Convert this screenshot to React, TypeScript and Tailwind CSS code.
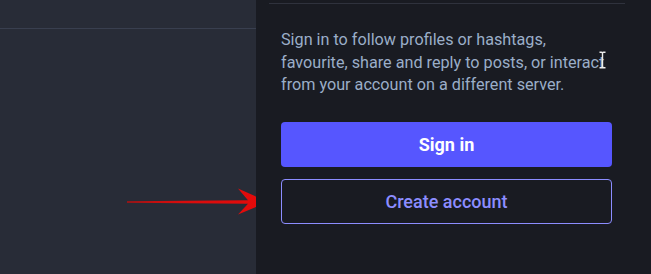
export default function App() {
  return (
    <div className="flex h-[274px] w-[651px] overflow-hidden font-['Roboto',sans-serif]">
      <div className="relative w-[256px] shrink-0 bg-[#282c37]">
        <div className="mt-[28px] h-px bg-[#393f4f]" />
        <svg className="absolute left-[126px] top-[188px]" width="145" height="28" viewBox="0 0 145 28">
          <defs>
            <linearGradient id="g" x1="0" x2="1" y1="0" y2="0">
              <stop offset="0" stopColor="#b01010" />
              <stop offset="0.4" stopColor="#d80d0d" />
              <stop offset="1" stopColor="#e60a0a" />
            </linearGradient>
          </defs>
          <path d="M1 13.3 L122 12.2 L112 0.5 L142 14 L112 26.5 L122 15.8 L1 14.7 Z" fill="url(#g)" />
        </svg>
      </div>
      <div className="relative flex-1 bg-[#191b22] pl-[25px] pr-[39px]">
        <div className="ml-[-12px] mr-[-13px] mt-[3px] h-px bg-[#2f323d]" />
        <p className="mt-[25px] text-[16.2px] leading-[22.5px] text-[#9baec8]">
          Sign in to follow profiles or hashtags, favourite, share and reply to posts, or interact from your account on a different server.
        </p>
        <button className="mt-[25px] flex h-[45px] w-full items-center justify-center rounded-[4px] bg-[#5656ff] text-[18px] font-bold text-white">
          Sign in
        </button>
        <button className="mt-[12px] flex h-[45px] w-full items-center justify-center rounded-[4px] border border-[#8c8dff] text-[18px] font-medium text-[#8c8dff]">
          Create account
        </button>
        <svg className="absolute left-[342px] top-[51px]" width="9" height="18" viewBox="0 0 9 18">
          <path d="M1.5 1.2 H3.5 Q4.5 1.2 4.5 2.5 V15.5 Q4.5 16.8 3.5 16.8 H1.5 M7.5 1.2 H5.5 Q4.5 1.2 4.5 2.5 M4.5 15.5 Q4.5 16.8 5.5 16.8 H7.5" stroke="#ececec" strokeWidth="1.4" fill="none" />
        </svg>
      </div>
    </div>
  );
}
